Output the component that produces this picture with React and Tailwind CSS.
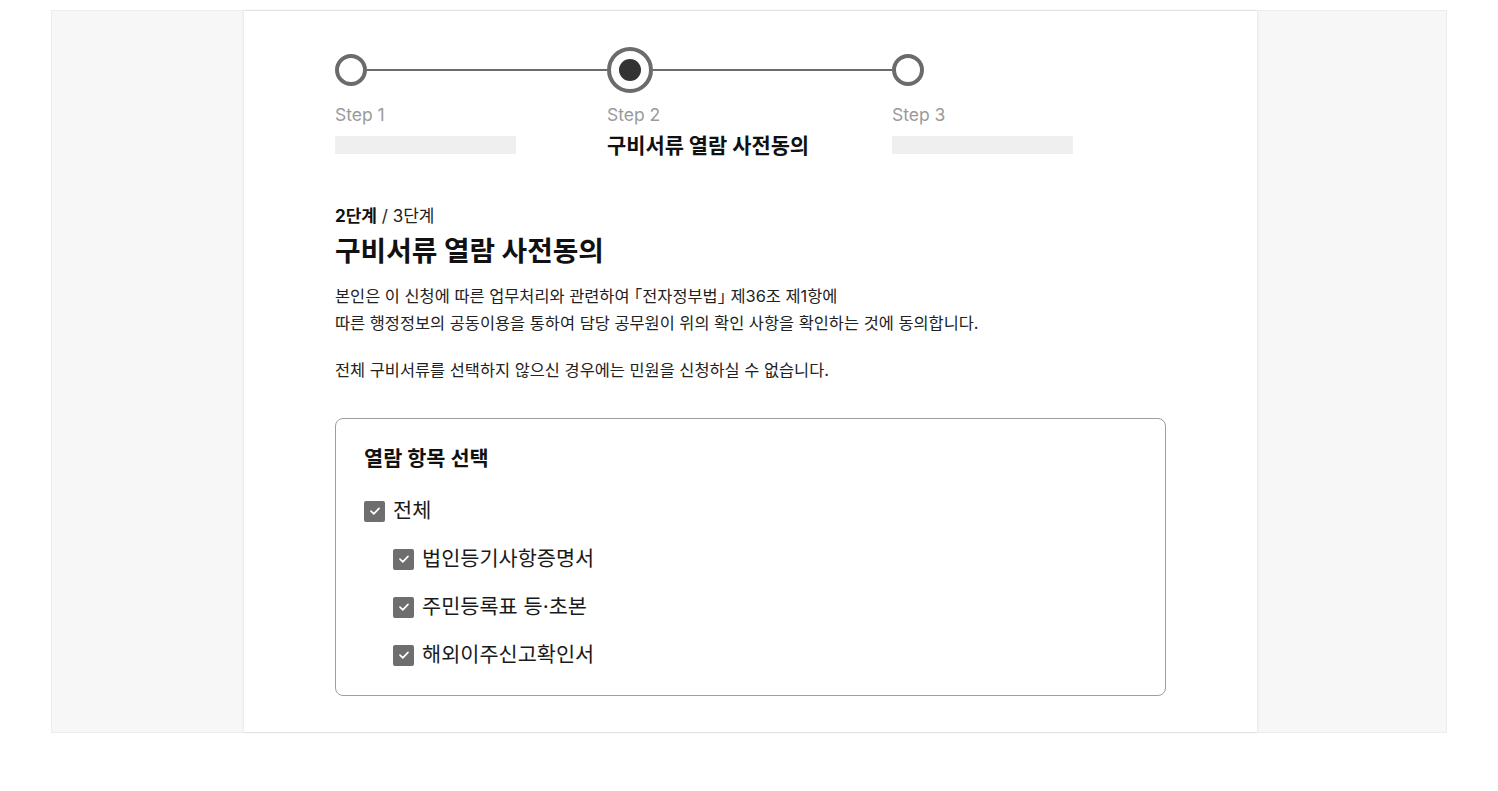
import React from "react";

const font = { fontFamily: 'Inter, "Noto Sans CJK KR", sans-serif' };

function Check({ label }) {
  return (
    <div className="flex items-center h-[28px]">
      <span className="w-[21px] h-[21px] rounded-[2px] bg-[#6e6e6e] flex items-center justify-center mr-[8px] shrink-0">
        <svg width="12" height="10" viewBox="0 0 12 10" fill="none">
          <path d="M2 5.2 L4.8 7.8 L10 2.4" stroke="#fff" strokeWidth="1.7" strokeLinecap="round" strokeLinejoin="round" />
        </svg>
      </span>
      <span className="text-[20.8px] leading-[28px] text-[#1a1a1a]">{label}</span>
    </div>
  );
}

export default function App() {
  return (
    <div className="w-[1498px] h-[791px] bg-white pt-[10px]" style={font}>
      <div className="ml-[51px] w-[1396px] h-[723px] border border-[#ececec] bg-[#f7f7f7]">
        <div className="ml-[192px] w-[1013px] h-full bg-white shadow-[0_0_3px_rgba(0,0,0,0.12)] px-[91px] pt-[36px]">
          {/* Stepper */}
          <div className="flex">
            <div className="w-[272px] flex flex-col">
              <div className="h-[46px] flex items-center">
                <div className="w-[32px] h-[32px] rounded-full border-[4px] border-[#6b6b6b] bg-white shrink-0" />
                <div className="flex-1 h-[2px] bg-[#6b6b6b]" />
              </div>
              <div className="mt-[10px] text-[17.5px] leading-[24px] text-[#9a9a9a]">Step 1</div>
              <div className="mt-[9px] w-[181px] h-[18px] bg-[#efefef]" />
            </div>
            <div className="w-[285px] flex flex-col">
              <div className="h-[46px] flex items-center">
                <div className="w-[46px] h-[46px] rounded-full border-[4px] border-[#6b6b6b] bg-white flex items-center justify-center shrink-0">
                  <div className="w-[22px] h-[22px] rounded-full bg-[#333333]" />
                </div>
                <div className="flex-1 h-[2px] bg-[#6b6b6b]" />
              </div>
              <div className="mt-[10px] text-[17.5px] leading-[24px] text-[#9a9a9a]">Step 2</div>
              <div className="mt-[7px] text-[20.9px] leading-[24px] font-bold text-[#111]">구비서류 열람 사전동의</div>
            </div>
            <div className="flex flex-col">
              <div className="h-[46px] flex items-center">
                <div className="w-[32px] h-[32px] rounded-full border-[4px] border-[#6b6b6b] bg-white shrink-0" />
              </div>
              <div className="mt-[10px] text-[17.5px] leading-[24px] text-[#9a9a9a]">Step 3</div>
              <div className="mt-[9px] w-[181px] h-[18px] bg-[#efefef]" />
            </div>
          </div>

          {/* Heading */}
          <div className="mt-[46px] text-[17px] leading-[24px] text-[#222]">
            <span className="font-bold text-[#111]">2단계</span> / 3단계
          </div>
          <h1 className="mt-[5px] text-[27.8px] leading-[36px] font-bold text-[#111]">구비서류 열람 사전동의</h1>
          <p className="mt-[14px] text-[16.4px] leading-[27px] text-[#222]">
            본인은 이 신청에 따른 업무처리와 관련하여 ｢전자정부법｣ 제36조 제1항에
            <br />
            따른 행정정보의 공동이용을 통하여 담당 공무원이 위의 확인 사항을 확인하는 것에 동의합니다.
          </p>
          <p className="mt-[20px] text-[16.4px] leading-[27px] text-[#222]">
            전체 구비서류를 선택하지 않으신 경우에는 민원을 신청하실 수 없습니다.
          </p>

          {/* Box */}
          <div className="mt-[34px] border border-[#9e9e9e] rounded-[8px] px-[28px] pt-[26px] pb-[26px]">
            <div className="text-[20.8px] leading-[28px] font-bold text-[#111]">열람 항목 선택</div>
            <div className="mt-[24px] flex flex-col gap-[20px]">
              <Check label="전체" />
              <div className="pl-[29px] flex flex-col gap-[20px]">
                <Check label="법인등기사항증명서" />
                <Check label="주민등록표 등·초본" />
                <Check label="해외이주신고확인서" />
              </div>
            </div>
          </div>
        </div>
      </div>
    </div>
  );
}
